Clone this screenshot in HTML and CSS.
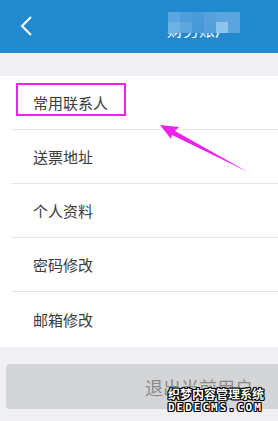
FILE: index.html
```html
<!DOCTYPE html>
<html lang="zh">
<head>
<meta charset="utf-8">
<link rel="stylesheet" href="styles.css">
</head>
<body>
<div class="page">
  <header class="topbar">
    <svg class="back" width="14" height="22" viewBox="0 0 14 22"><polyline points="11,2 2,11 11,20" fill="none" stroke="#fff" stroke-width="2"/></svg>
    <div class="title">财务账户
      <div class="mosaic">
        <span class="c1"></span><span class="c2"></span><span class="c3"></span><span class="c4"></span><span class="c5"></span><span class="c6"></span>
        <span class="c7"></span><span class="c8"></span><span class="c9"></span><span class="c10"></span><span class="c11"></span><span class="c12"></span>
      </div>
    </div>
  </header>
  <div class="spacer"></div>
  <ul class="list">
    <li class="item"><span>常用联系人</span></li>
    <li class="item"><span>送票地址</span></li>
    <li class="item"><span>个人资料</span></li>
    <li class="item"><span>密码修改</span></li>
    <li class="item last"><span>邮箱修改</span></li>
  </ul>
  <div class="bottom">
    <div class="logout">退出当前用户</div>
  </div>
  <div class="highlight"></div>
  <svg class="arrow" width="278" height="421" viewBox="0 0 278 421">
    <polygon points="160,125 179,127 175,131 248,172 172,135 171,139" fill="#ee22ee"/>
  </svg>
  <div class="watermark">
    <div class="wm1">织梦内容管理系统</div>
    <div class="wm2">DEDECMS.COM</div>
  </div>
</div>
</body>
</html>
```

FILE: styles.css
```css
* { box-sizing: border-box; }
html, body { margin: 0; padding: 0; }
body {
  width: 278px;
  height: 421px;
  overflow: hidden;
  background: #efeff4;
  font-family: "Noto Sans CJK SC", "Noto Sans", sans-serif;
}
.page { position: relative; width: 278px; height: 421px; overflow: hidden; }
.topbar {
  height: 53px;
  background: #2389cf;
  display: flex;
  align-items: center;
  padding-left: 20px;
}
.back { display: block; margin-top: -1px; }
.title {
  position: relative;
  margin-left: 133px;
  margin-top: 4px;
  color: #fff;
  font-size: 16px;
  line-height: 20px;
}
.mosaic {
  position: absolute;
  left: 1px;
  top: -7px;
  width: 72px;
  height: 21px;
  display: grid;
  grid-template-columns: repeat(6, 12px);
  grid-template-rows: 10px 11px;
}
.c1 { background: #5ba6de; }
.c2 { background: #4e9ed9; }
.c3 { background: #4a9bd8; }
.c4 { background: #56a1dc; }
.c5 { background: #5ca5de; }
.c6 { background: #5ba4dd; }
.c7 { background: #6cb2e5; }
.c8 { background: #5da6de; }
.c9 { background: #4799d7; }
.c10 { background: #529fda; }
.c11 { background: #8dc5ed; }
.c12 { background: #5aa4dd; }
.spacer { height: 23px; }
.list {
  list-style: none;
  margin: 0;
  padding: 0 0 0 11px;
  background: #fff;
}
.item {
  height: 54px;
  display: flex;
  align-items: center;
  padding-left: 22px;
  border-bottom: 1px solid #e6e6e8;
  color: #3a3a3a;
  font-size: 15px;
}
.item.last { border-bottom: none; height: 55px; }
.bottom { padding: 17px 0 0 6px; }
.logout {
  width: 386px;
  height: 45px;
  border-radius: 4px;
  background: #d4d5d7;
  color: #8a8a8a;
  font-size: 18px;
  display: flex;
  align-items: center;
  justify-content: center;
}
.highlight {
  position: absolute;
  left: 16px;
  top: 83px;
  width: 110px;
  height: 33px;
  border: 2px solid #ee22ee;
}
.arrow { position: absolute; left: 0; top: 0; }
.watermark {
  position: absolute;
  left: 168px;
  top: 386px;
  width: 100px;
  color: #fff;
  font-weight: bold;
  text-shadow: -1px -1px 0 #000, 1px -1px 0 #000, -1px 1px 0 #000, 1px 1px 0 #000, 0 1px 0 #000, 0 -1px 0 #000, 1px 0 0 #000, -1px 0 0 #000;
}
.wm1 { font-size: 12px; line-height: 15px; }
.wm2 { font-family: "DejaVu Sans Mono", monospace; font-size: 11px; line-height: 13px; letter-spacing: 2px; }
```
